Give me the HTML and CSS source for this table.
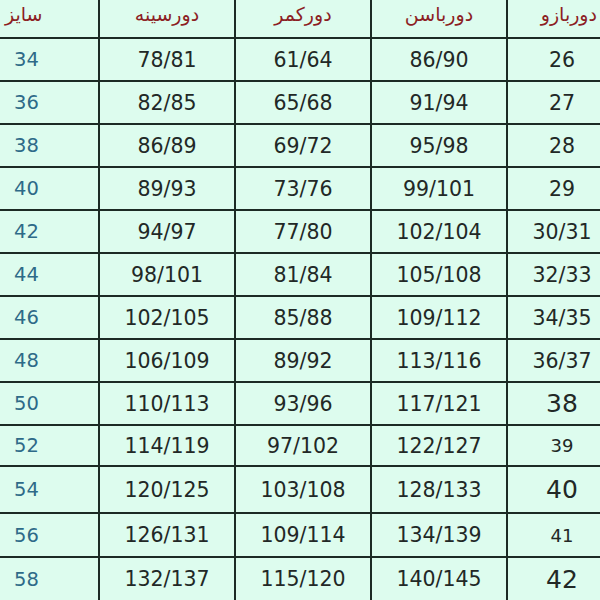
FILE: index.html
```html
<!DOCTYPE html>
<html lang="fa">
<head>
<meta charset="utf-8">
<title>جدول سایز</title>
<link rel="stylesheet" href="styles.css">
</head>
<body>
<div class="sheet">
  <div class="cell head head-size">سایز</div>
  <div class="cell head">دورسینه</div>
  <div class="cell head">دورکمر</div>
  <div class="cell head">دورباسن</div>
  <div class="cell head head-last">دوربازو</div>

  <div class="cell size">34</div><div class="cell">78/81</div><div class="cell">61/64</div><div class="cell">86/90</div><div class="cell last">26</div>
  <div class="cell size">36</div><div class="cell">82/85</div><div class="cell">65/68</div><div class="cell">91/94</div><div class="cell last">27</div>
  <div class="cell size">38</div><div class="cell">86/89</div><div class="cell">69/72</div><div class="cell">95/98</div><div class="cell last">28</div>
  <div class="cell size">40</div><div class="cell">89/93</div><div class="cell">73/76</div><div class="cell">99/101</div><div class="cell last">29</div>
  <div class="cell size">42</div><div class="cell">94/97</div><div class="cell">77/80</div><div class="cell">102/104</div><div class="cell last">30/31</div>
  <div class="cell size">44</div><div class="cell">98/101</div><div class="cell">81/84</div><div class="cell">105/108</div><div class="cell last">32/33</div>
  <div class="cell size">46</div><div class="cell">102/105</div><div class="cell">85/88</div><div class="cell">109/112</div><div class="cell last">34/35</div>
  <div class="cell size">48</div><div class="cell">106/109</div><div class="cell">89/92</div><div class="cell">113/116</div><div class="cell last">36/37</div>
  <div class="cell size">50</div><div class="cell">110/113</div><div class="cell">93/96</div><div class="cell">117/121</div><div class="cell last big">38</div>
  <div class="cell size">52</div><div class="cell">114/119</div><div class="cell">97/102</div><div class="cell">122/127</div><div class="cell last small">39</div>
  <div class="cell size">54</div><div class="cell">120/125</div><div class="cell">103/108</div><div class="cell">128/133</div><div class="cell last big">40</div>
  <div class="cell size">56</div><div class="cell">126/131</div><div class="cell">109/114</div><div class="cell">134/139</div><div class="cell last small">41</div>
  <div class="cell size">58</div><div class="cell">132/137</div><div class="cell">115/120</div><div class="cell">140/145</div><div class="cell last big">42</div>
</div>
</body>
</html>
```
FILE: styles.css
```css
html, body {
  margin: 0;
  padding: 0;
  width: 600px;
  height: 600px;
  overflow: hidden;
  background: #1c2a24;
}

.sheet {
  display: grid;
  grid-template-columns: 98px 134px 134px 134px 92px;
  grid-template-rows: 37px 41px 41px 41px 41px 41px 41px 41px 41px 41px 39px 45px 42px 42px;
  gap: 2px;
  width: 600px;
  height: 600px;
  background: #1c2a24;
}

.cell {
  background: #ddfcee;
  display: flex;
  align-items: center;
  justify-content: center;
  font-family: "DejaVu Sans", sans-serif;
  font-size: 20.5px;
  color: #222826;
  white-space: nowrap;
}

.head {
  font-size: 19px;
  color: #8c1e24;
  align-items: flex-start;
  padding-top: 3px;
  box-sizing: border-box;
}

.head-size {
  justify-content: flex-start;
  padding-left: 5px;
}

.head-last {
  justify-content: flex-end;
  padding-right: 3px;
}

.size {
  justify-content: flex-start;
  padding-left: 14px;
  font-size: 19.5px;
  color: #2e6a88;
}

.last {
  padding-left: 16px;
  box-sizing: border-box;
}

.big {
  font-size: 25px;
}

.small {
  font-size: 18px;
}
```
